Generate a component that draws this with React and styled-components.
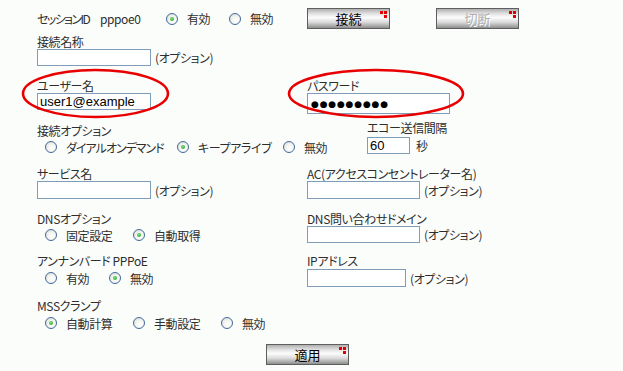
import React from "react";
import styled, { createGlobalStyle } from "styled-components";

const GlobalStyle = createGlobalStyle`
    body {
        margin: 0;
        background: #fbfdfb;
        font-family: "Noto Sans CJK JP", "Liberation Sans", sans-serif;
        font-size: 12px;
        color: #2e2e2e;
        font-feature-settings: "palt";
        letter-spacing: -0.4px;
    }
`;

const Page = styled.div`
    width: 623px;
    height: 371px;
    padding: 8px 0 0 37px;
    box-sizing: border-box;
`;

const Row = styled.div`
    display: flex;
    align-items: ${p => p.$align || "flex-start"};
    margin-top: ${p => p.$mt || 0}px;
`;

const Cell = styled.div`
    flex: none;
    width: ${p => (p.$w ? `${p.$w}px` : "auto")};
    display: flex;
    align-items: center;
    white-space: nowrap;
    letter-spacing: ${p => (p.$tight ? "-1.6px" : "inherit")};
`;

const Field = styled.div`
    position: relative;
    display: flex;
    flex-direction: column;
`;

const Label = styled.div`
    height: 14px;
    line-height: 14px;
    margin-bottom: ${p => p.$gap || 0}px;
    white-space: nowrap;
`;

const Control = styled.div`
    display: flex;
    align-items: center;
`;

const TextInput = styled.input`
    width: ${p => p.$w}px;
    height: ${p => p.$h || 18}px;
    box-sizing: border-box;
    margin: 0;
    padding: 0 2px;
    border: 1px solid #7f9db9;
    background: #fff;
    font-family: "Liberation Sans", sans-serif;
    font-size: 13px;
    letter-spacing: 0;
    color: #000;
    outline: none;
`;

const Dots = styled(TextInput)`
    font-family: "DejaVu Sans", sans-serif;
    font-size: 9px;
    letter-spacing: 0.8px;
    padding-left: 3px;
`;

const Note = styled.span`
    margin-left: ${p => (p.$ml === undefined ? 4 : p.$ml)}px;
    white-space: nowrap;
`;

const RadioGroup = styled.div`
    display: flex;
    align-items: center;
    height: 14px;
    padding-left: ${p => (p.$pad === undefined ? 8 : p.$pad)}px;
`;

const RadioItem = styled.label`
    flex: none;
    display: flex;
    align-items: center;
    width: ${p => (p.$w ? `${p.$w}px` : "auto")};
    letter-spacing: ${p => (p.$tight ? "-1px" : "inherit")};
    white-space: nowrap;
`;

const RadioMark = styled.span`
    flex: none;
    width: 12px;
    height: 12px;
    box-sizing: border-box;
    margin-right: 9px;
    border: 1px solid #3f6a9c;
    border-radius: 50%;
    background: radial-gradient(circle at 60% 65%, #ffffff 0%, #f4f4f0 45%, #d6d6d0 100%);
    display: flex;
    align-items: center;
    justify-content: center;

    &::after {
        content: "";
        width: 4px;
        height: 4px;
        border-radius: 50%;
        background: ${p => (p.$on ? "radial-gradient(circle at 40% 40%, #7ee07e, #1c9a1c)" : "transparent")};
    }
`;

const Button = styled.button`
    position: relative;
    width: 83px;
    height: 21px;
    margin: 0 0 0 ${p => p.$ml || 0}px;
    padding: 0;
    border: 1px solid #5e5e5e;
    background: linear-gradient(#b0b0b0 0%, #e2e2e2 25%, #fcfcfc 45%, #dadada 70%, #8e8e8e 100%);
    font-family: "Noto Sans CJK JP", sans-serif;
    font-size: 13px;
    line-height: 19px;
    color: ${p => (p.disabled ? "#b0b0b0" : "#000")};
    text-shadow: ${p => (p.disabled ? "1px 1px 0 #fff" : "none")};

    &::after {
        content: "";
        position: absolute;
        top: 2px;
        right: 6px;
        width: 3px;
        height: 3px;
        background: #e00000;
        box-shadow: 4px 0 0 #e00000, 4px 4px 0 #e00000;
    }
`;

const Ring = styled.svg`
    position: absolute;
    left: ${p => p.$x}px;
    top: ${p => p.$y}px;
    overflow: visible;
    pointer-events: none;
`;

const Radio = ({ on, w, tight, children }) => (
    <RadioItem $w={w} $tight={tight}>
        <RadioMark $on={on} />
        {children}
    </RadioItem>
);

const Ellipse = ({ x, y, w, h }) => (
    <Ring $x={x} $y={y} width={w} height={h}>
        <ellipse cx={w / 2} cy={h / 2} rx={w / 2 - 1} ry={h / 2 - 1} fill="none" stroke="#e80000" strokeWidth="2.6" />
    </Ring>
);

export default function App() {
    return (
        <>
            <GlobalStyle />
            <Page>
                <Row $align="center">
                    <Cell $w={63} $tight>セッションID</Cell>
                    <Cell $w={66}>pppoe0</Cell>
                    <Cell $w={141}>
                        <RadioGroup $pad={0}>
                            <Radio on w={63}>有効</Radio>
                            <Radio>無効</Radio>
                        </RadioGroup>
                    </Cell>
                    <Button>接続</Button>
                    <Button disabled $ml={46}>切断</Button>
                </Row>

                <Row $mt={6}>
                    <Field>
                        <Label>接続名称</Label>
                        <Control>
                            <TextInput $w={114} $h={17} />
                            <Note>(オプション)</Note>
                        </Control>
                    </Field>
                </Row>

                <Row $mt={13}>
                    <Cell $w={270}>
                        <Field>
                            <Ellipse x={-15} y={-10} w={147} h={49} />
                            <Label>ユーザー名</Label>
                            <TextInput $w={114} $h={17} defaultValue="user1@example" />
                        </Field>
                    </Cell>
                    <Field>
                        <Ellipse x={-19} y={-10} w={176} h={49} />
                        <Label>パスワード</Label>
                        <Dots $w={143} $h={21} defaultValue="●●●●●●●●●" />
                    </Field>
                </Row>

                <Row $mt={7} $align="flex-end">
                    <Cell $w={330}>
                        <Field>
                            <Label $gap={2}>接続オプション</Label>
                            <RadioGroup>
                                <Radio w={132} tight>ダイアルオンデマンド</Radio>
                                <Radio on w={106}>キープアライブ</Radio>
                                <Radio>無効</Radio>
                            </RadioGroup>
                        </Field>
                    </Cell>
                    <Field>
                        <Label $gap={2}>エコー送信間隔</Label>
                        <Control>
                            <TextInput $w={43} $h={17} defaultValue="60" />
                            <Note $ml={6}>秒</Note>
                        </Control>
                    </Field>
                </Row>

                <Row $mt={13}>
                    <Cell $w={270}>
                        <Field>
                            <Label>サービス名</Label>
                            <Control>
                                <TextInput $w={114} />
                                <Note>(オプション)</Note>
                            </Control>
                        </Field>
                    </Cell>
                    <Field>
                        <Label>AC(アクセスコンセントレーター名)</Label>
                        <Control>
                            <TextInput $w={113} />
                            <Note>(オプション)</Note>
                        </Control>
                    </Field>
                </Row>

                <Row $mt={13}>
                    <Cell $w={270}>
                        <Field>
                            <Label $gap={2}>DNSオプション</Label>
                            <RadioGroup>
                                <Radio w={88}>固定設定</Radio>
                                <Radio on>自動取得</Radio>
                            </RadioGroup>
                        </Field>
                    </Cell>
                    <Field>
                        <Label>DNS問い合わせドメイン</Label>
                        <Control>
                            <TextInput $w={113} $h={17} />
                            <Note>(オプション)</Note>
                        </Control>
                    </Field>
                </Row>

                <Row $mt={11}>
                    <Cell $w={270}>
                        <Field>
                            <Label $gap={3}>アンナンバード PPPoE</Label>
                            <RadioGroup>
                                <Radio w={64}>有効</Radio>
                                <Radio on>無効</Radio>
                            </RadioGroup>
                        </Field>
                    </Cell>
                    <Field>
                        <Label $gap={1}>IPアドレス</Label>
                        <Control>
                            <TextInput $w={99} />
                            <Note>(オプション)</Note>
                        </Control>
                    </Field>
                </Row>

                <Row $mt={12}>
                    <Field>
                        <Label $gap={3}>MSSクランプ</Label>
                        <RadioGroup>
                            <Radio on w={88}>自動計算</Radio>
                            <Radio w={88}>手動設定</Radio>
                            <Radio>無効</Radio>
                        </RadioGroup>
                    </Field>
                </Row>

                <Row $mt={14}>
                    <Button $ml={229}>適用</Button>
                </Row>
            </Page>
        </>
    );
}
